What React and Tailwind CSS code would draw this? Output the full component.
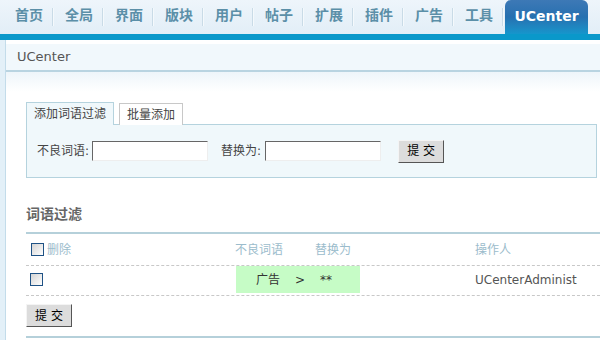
import React from "react";

const navItems = ["首页", "全局", "界面", "版块", "用户", "帖子", "扩展", "插件", "广告", "工具"];

const font = { fontFamily: '"DejaVu Sans", "Noto Sans CJK SC", sans-serif' };

function Checkbox() {
  return (
    <span className="inline-block h-[13px] w-[13px] border border-[#1f5285] bg-linear-to-br from-[#d4d4d4] to-white" />
  );
}

function TextInput({ className = "" }) {
  return (
    <span
      className={`inline-block h-[20px] w-[116px] border border-t-[#666] border-l-[#666] border-r-[#eee] border-b-[#eee] bg-white ${className}`}
    />
  );
}

function SubmitButton() {
  return (
    <button
      type="button"
      className="h-[23px] w-[46px] border border-t-[#f4f4f4] border-l-[#f4f4f4] border-r-[#555] border-b-[#555] bg-[#dcdcdc] text-[12px] leading-none text-black"
    >
      提 交
    </button>
  );
}

export default function App() {
  return (
    <div className="h-[340px] w-[600px] overflow-hidden bg-white text-[12px] text-[#555]" style={font}>
      {/* top nav */}
      <div className="flex h-[34px] items-end bg-linear-to-b from-[#eef5fb] to-[#e2eef7] pl-[4px]">
        {navItems.map((item) => (
          <div key={item} className="flex h-[34px] w-[50px] items-center">
            <span className="flex-1 pl-[11px] pb-[3px] text-[14px] font-bold text-[#5b8fa8]">{item}</span>
            <span className="h-[18px] w-[2px] border-l border-[#c9dbe7] bg-[#f4f9fc]" />
          </div>
        ))}
        <div className="ml-[1px] flex h-[34px] w-[83px] items-center justify-center rounded-t-[6px] bg-linear-to-b from-[#3d79b6] via-[#2670b0] to-[#1596cc] pb-[2px] text-[14px] font-bold text-white">
          UCenter
        </div>
      </div>
      <div className="h-[6px] bg-[#0a98ca]" />

      <div className="flex">
        <div className="h-[300px] w-[6px] border-r border-[#c3dcea] bg-[#e3f0f8]" />
        <div className="flex-1">
          <div className="pt-[4px]">
            <div className="flex h-[28px] items-center border-b-2 border-[#b9d4e1] bg-[#f1f8fc] pl-[11px] text-[13px] text-[#555]">
              UCenter
            </div>
            <div className="h-[20px] bg-linear-to-b from-[#eef5fa] to-white" />
          </div>

          <div className="pl-[20px] pr-[3px] pt-[10px]">
            {/* tabs */}
            <div className="flex items-end gap-[5px]">
              <div className="relative z-10 -mb-px flex h-[23px] w-[88px] items-center justify-center border border-b-0 border-[#b5d3de] bg-[#f0f8fb] text-[12px] text-[#444]">
                添加词语过滤
              </div>
              <div className="-mb-px flex h-[22px] w-[64px] items-center justify-center border border-b-0 border-[#c8c8c8] bg-white text-[12px] text-[#444]">
                批量添加
              </div>
            </div>
            <div className="flex h-[54px] items-center border border-[#b5d3de] bg-[#f0f8fb] pl-[10px] text-[12px] text-[#444]">
              <span>不良词语:</span>
              <TextInput className="ml-[3px]" />
              <span className="ml-[13px]">替换为:</span>
              <TextInput className="ml-[4px]" />
              <span className="ml-[17px]">
                <SubmitButton />
              </span>
            </div>

            {/* word filter */}
            <div className="mt-[26px] text-[14px] font-bold leading-[20px] text-[#666]">词语过滤</div>
            <div className="mr-[-3px] mt-[8px] border-t-2 border-[#b5d0da]">
              <div className="flex h-[32px] items-center border-b border-dashed border-[#c8c8c8] text-[12px] text-[#9bbccc]">
                <div className="flex w-[209px] items-center pl-[5px]">
                  <Checkbox />
                  <span className="ml-[3px]">删除</span>
                </div>
                <div className="w-[80px]">不良词语</div>
                <div className="w-[160px]">替换为</div>
                <div>操作人</div>
              </div>
              <div className="flex h-[30px] items-start border-b border-dashed border-[#c8c8c8] text-[12px]">
                <div className="flex h-[27px] w-[210px] items-center pl-[4px]">
                  <Checkbox />
                </div>
                <div className="flex h-[27px] w-[124px] items-center bg-[#c6fcc6] pl-[20px] text-[#333]">
                  <span>广告</span>
                  <span className="ml-[15px]">&gt;</span>
                  <span className="ml-[15px]">**</span>
                </div>
                <div className="flex h-[27px] items-center pl-[115px] text-[#555]">UCenterAdminist</div>
              </div>
              <div className="pt-[8px]">
                <SubmitButton />
              </div>
              <div className="mt-[9px] border-t-2 border-[#b5d0da]" />
            </div>
          </div>
        </div>
      </div>
    </div>
  );
}
